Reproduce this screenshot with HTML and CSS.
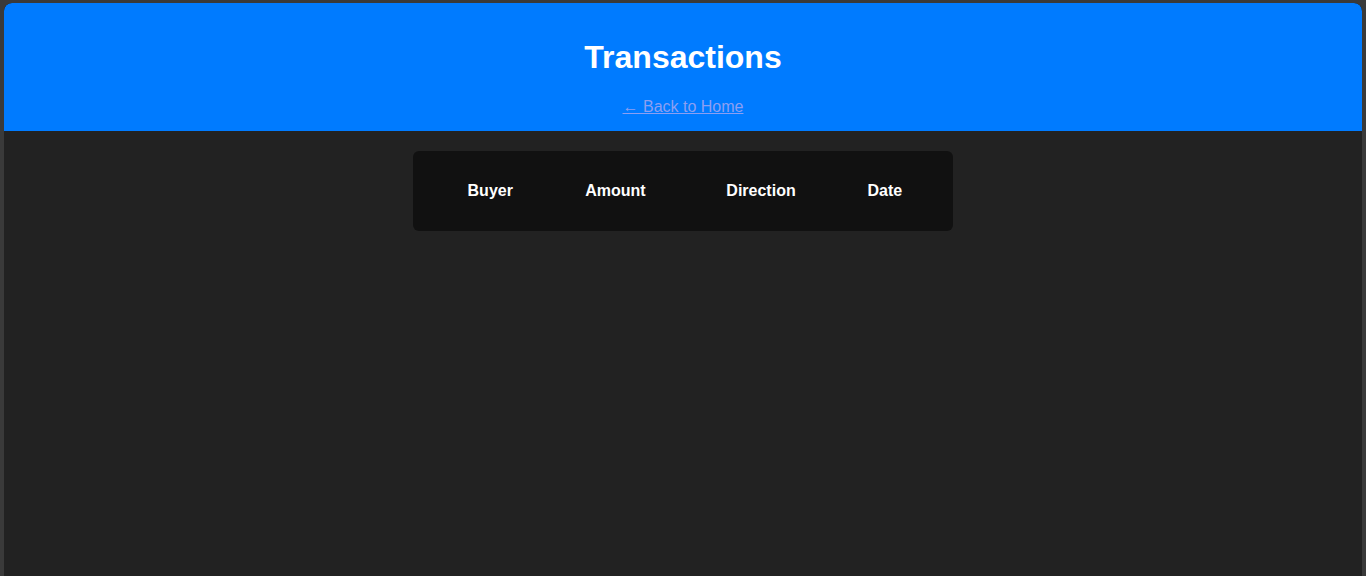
FILE: index.html
```html
<!DOCTYPE html>
<html>
<head>
<meta charset="utf-8">
<title>Transactions</title>
<link rel="stylesheet" href="styles.css">
</head>
<body>
<div class="app">
  <header class="header">
    <h1 class="title">Transactions</h1>
    <a class="back" href="#">&larr; Back to Home</a>
  </header>
  <main class="main">
    <div class="table-card">
      <table class="tx-table">
        <thead>
          <tr>
            <th>Buyer</th>
            <th>Amount</th>
            <th>Direction</th>
            <th>Date</th>
          </tr>
        </thead>
        <tbody></tbody>
      </table>
    </div>
  </main>
</div>
</body>
</html>
```

FILE: styles.css
```css
html, body {
  margin: 0;
  padding: 0;
  height: 100%;
}
body {
  background: #3a3a3a;
  font-family: "Liberation Sans", Arial, sans-serif;
  color: #fff;
  padding: 3px 4px 0;
  box-sizing: border-box;
}
.app {
  background: #222222;
  border-radius: 8px 8px 0 0;
  min-height: 100%;
  overflow: hidden;
}
.header {
  background: #007bff;
  text-align: center;
  padding: 15px 20px;
  border-radius: 8px 8px 0 0;
}
.title {
  font-size: 32px;
  font-weight: bold;
  margin: 21.44px 0;
  color: #fff;
}
.back {
  color: #8c9ff2;
  font-size: 16px;
  text-decoration: underline;
}
.main {
  padding-top: 20px;
  display: flex;
  justify-content: center;
}
.table-card {
  width: 500px;
  background: #111111;
  border-radius: 6px;
  padding: 20px;
}
.tx-table {
  width: 100%;
}
.tx-table th {
  font-size: 16px;
  font-weight: bold;
  color: #fff;
  padding: 9px 10px;
  text-align: center;
}
```
